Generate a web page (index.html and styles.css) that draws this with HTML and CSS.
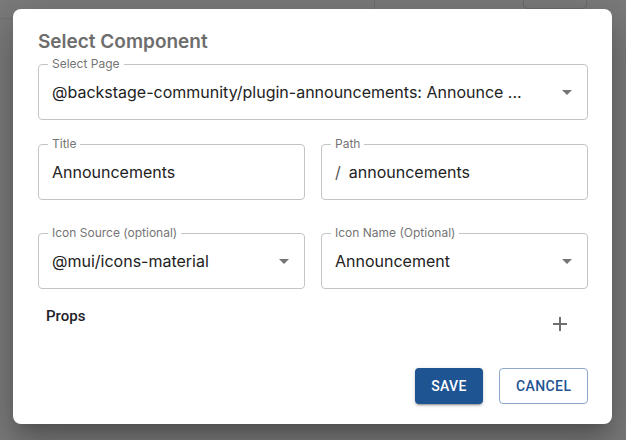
FILE: index.html
```html
<!DOCTYPE html>
<html lang="en">
<head>
<meta charset="utf-8">
<title>Select Component</title>
<link rel="stylesheet" href="styles.css">
</head>
<body>
<div class="page-bg">
  <div class="bg-hline"></div>
  <div class="bg-vline"></div>
  <div class="bg-box"></div>
</div>
<div class="dialog">
  <h2 class="dialog-title">Select Component</h2>
  <div class="field select">
    <span class="field-label">Select Page</span>
    <span class="field-value">@backstage-community/plugin-announcements: Announce ...</span>
    <svg class="arrow" viewBox="0 0 24 24"><path d="M7 10l5 5 5-5z"/></svg>
  </div>
  <div class="row row-gap-a">
    <div class="field">
      <span class="field-label">Title</span>
      <span class="field-value">Announcements</span>
    </div>
    <div class="field">
      <span class="field-label">Path</span>
      <span class="field-value"><span class="prefix">/</span>announcements</span>
    </div>
  </div>
  <div class="row row-gap-b">
    <div class="field select">
      <span class="field-label">Icon Source (optional)</span>
      <span class="field-value">@mui/icons-material</span>
      <svg class="arrow" viewBox="0 0 24 24"><path d="M7 10l5 5 5-5z"/></svg>
    </div>
    <div class="field select">
      <span class="field-label">Icon Name (Optional)</span>
      <span class="field-value">Announcement</span>
      <svg class="arrow" viewBox="0 0 24 24"><path d="M7 10l5 5 5-5z"/></svg>
    </div>
  </div>
  <div class="props-row">
    <span class="props-title">Props</span>
    <button class="icon-btn" aria-label="add">
      <svg viewBox="0 0 24 24"><path d="M19 13h-6v6h-2v-6H5v-2h6V5h2v6h6v2z"/></svg>
    </button>
  </div>
  <div class="actions">
    <button class="btn btn-primary">Save</button>
    <button class="btn btn-outline">Cancel</button>
  </div>
</div>
</body>
</html>
```
FILE: styles.css
```css
html, body {
  margin: 0;
  padding: 0;
}
body {
  width: 626px;
  height: 440px;
  background: #7b7b7b;
  overflow: hidden;
  position: relative;
  font-family: Inter, "Liberation Sans", sans-serif;
}
.page-bg {
  position: absolute;
  inset: 0;
}
.bg-hline {
  position: absolute;
  left: 0;
  top: 18px;
  width: 20px;
  height: 1px;
  background: #727272;
}
.bg-vline {
  position: absolute;
  left: 374px;
  top: 0;
  width: 1px;
  height: 12px;
  background: #6f6f6f;
}
.bg-box {
  position: absolute;
  left: 523px;
  top: -6px;
  width: 62px;
  height: 13px;
  border: 1px solid #6a6a6a;
  border-radius: 4px;
}
.dialog {
  position: relative;
  margin: 9px 13px 0 13px;
  width: 599px;
  height: 415px;
  box-sizing: border-box;
  background: #fff;
  border-radius: 8px;
  padding: 19px 24px 20px 25px;
  box-shadow: 0 11px 15px -7px rgba(0,0,0,0.2), 0 24px 38px 3px rgba(0,0,0,0.14), 0 9px 46px 8px rgba(0,0,0,0.12);
}
.dialog-title {
  margin: 0;
  font-size: 19px;
  line-height: 27px;
  font-weight: 600;
  color: #6d6d6d;
}
.field {
  position: relative;
  height: 56px;
  box-sizing: border-box;
  border: 1px solid #c4c4c4;
  border-radius: 4px;
  display: flex;
  align-items: center;
  padding: 0 13px;
  margin-top: 9px;
}
.field-label {
  position: absolute;
  left: 9px;
  top: -9px;
  padding: 0 4px;
  background: #fff;
  font-size: 12px;
  line-height: 16px;
  color: #757575;
}
.field-value {
  font-size: 16px;
  color: #222;
  white-space: nowrap;
}
.prefix {
  margin-right: 8px;
  color: #555;
}
.arrow {
  position: absolute;
  right: 8px;
  top: 15px;
  width: 24px;
  height: 24px;
  fill: #757575;
}
.row {
  display: grid;
  grid-template-columns: 1fr 1fr;
  column-gap: 16px;
}
.row .field {
  margin-top: 0;
}
.row-gap-a {
  margin-top: 24px;
}
.row-gap-b {
  margin-top: 33px;
}
.props-row {
  margin-top: 15px;
  display: flex;
  justify-content: space-between;
  align-items: flex-start;
  height: 40px;
  padding-left: 8px;
}
.props-title {
  font-family: Roboto, sans-serif;
  font-weight: 500;
  font-size: 15px;
  line-height: 24px;
  color: #1f2329;
}
.icon-btn {
  width: 48px;
  height: 40px;
  margin-right: 4px;
  border: 0;
  padding: 0;
  background: transparent;
  display: flex;
  align-items: center;
  justify-content: center;
}
.icon-btn svg {
  width: 24px;
  height: 24px;
  fill: #6e6e6e;
}
.actions {
  margin-top: 24px;
  display: flex;
  justify-content: flex-end;
  gap: 16px;
}
.btn {
  height: 36px;
  box-sizing: border-box;
  border-radius: 4px;
  font-family: Roboto, sans-serif;
  font-weight: 500;
  font-size: 14px;
  letter-spacing: 0.4px;
  text-transform: uppercase;
  padding: 0 16px;
}
.btn-primary {
  width: 68px;
  background: #1f5493;
  color: #fff;
  border: 0;
  box-shadow: 0 3px 1px -2px rgba(0,0,0,0.2), 0 2px 2px 0 rgba(0,0,0,0.14), 0 1px 5px 0 rgba(0,0,0,0.12);
}
.btn-outline {
  width: 89px;
  background: #fff;
  color: #1f5493;
  border: 1px solid #8ea9cb;
}
```
